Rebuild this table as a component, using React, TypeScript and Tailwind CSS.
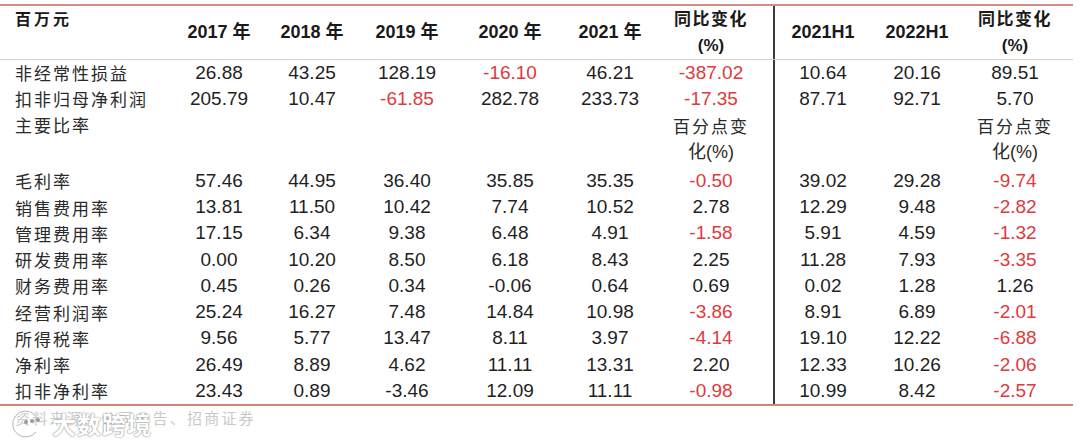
import React from "react";

type Cell = { v: string; red?: boolean };
type Row = { label: string; cells: Cell[] };

const N = (v: string): Cell => ({ v, red: v.startsWith("-") });
const B = (v: string): Cell => ({ v });

const widths = ["w-[170px]", "w-[98px]", "w-[88px]", "w-[102px]", "w-[104px]", "w-[96px]", "w-[115px]", "w-[98px]", "w-[92px]", "w-[110px]"];
const extra = ["", "", "", "", "", "", "pr-[9px]", "border-l-2 border-[#3a3a3a]", "", "pr-[6px]"];

const top: Row[] = [
  { label: "非经常性损益", cells: ["26.88", "43.25", "128.19", "-16.10", "46.21", "-387.02", "10.64", "20.16", "89.51"].map(N) },
  { label: "扣非归母净利润", cells: ["205.79", "10.47", "-61.85", "282.78", "233.73", "-17.35", "87.71", "92.71", "5.70"].map(N) },
];

const ratios: Row[] = [
  { label: "毛利率", cells: ["57.46", "44.95", "36.40", "35.85", "35.35", "-0.50", "39.02", "29.28", "-9.74"].map(N) },
  { label: "销售费用率", cells: ["13.81", "11.50", "10.42", "7.74", "10.52", "2.78", "12.29", "9.48", "-2.82"].map(N) },
  { label: "管理费用率", cells: ["17.15", "6.34", "9.38", "6.48", "4.91", "-1.58", "5.91", "4.59", "-1.32"].map(N) },
  { label: "研发费用率", cells: ["0.00", "10.20", "8.50", "6.18", "8.43", "2.25", "11.28", "7.93", "-3.35"].map(N) },
  {
    label: "财务费用率",
    cells: [N("0.45"), N("0.26"), N("0.34"), B("-0.06"), N("0.64"), N("0.69"), N("0.02"), N("1.28"), N("1.26")],
  },
  { label: "经营利润率", cells: ["25.24", "16.27", "7.48", "14.84", "10.98", "-3.86", "8.91", "6.89", "-2.01"].map(N) },
  { label: "所得税率", cells: ["9.56", "5.77", "13.47", "8.11", "3.97", "-4.14", "19.10", "12.22", "-6.88"].map(N) },
  { label: "净利率", cells: ["26.49", "8.89", "4.62", "11.11", "13.31", "2.20", "12.33", "10.26", "-2.06"].map(N) },
  {
    label: "扣非净利率",
    cells: [N("23.43"), N("0.89"), B("-3.46"), N("12.09"), N("11.11"), N("-0.98"), N("10.99"), N("8.42"), N("-2.57")],
  },
];

const cjk = "font-['Noto_Sans_CJK_SC',sans-serif]";
const num = "font-['Liberation_Sans','Noto_Sans_CJK_SC',sans-serif]";

function DataRow({ row, h }: { row: Row; h: string }) {
  return (
    <div className={`flex ${h}`}>
      <div className={`${widths[0]} flex items-center pl-[15px] text-[17px] tracking-[2px] text-[#2a2a2a] ${cjk}`}>{row.label}</div>
      {row.cells.map((c, i) => (
        <div
          key={i}
          className={`${widths[i + 1]} ${extra[i + 1]} flex items-center justify-center text-[19px] ${num} ${c.red ? "text-[#e0393e]" : "text-[#1f1f1f]"}`}
        >
          {c.v}
        </div>
      ))}
    </div>
  );
}

export default function App() {
  const headers = ["2017 年", "2018 年", "2019 年", "2020 年", "2021 年"];
  return (
    <div className="relative w-[1080px] h-[446px] bg-white overflow-hidden">
      <div className="w-[1073px] pt-[4px]">
        <div className="h-[2px] bg-[#cf8f84]" />
        <div className="flex h-[53px] font-bold text-[#1a1a1a]">
          <div className={`${widths[0]} pl-[15px] pt-[1px] text-[16px] leading-[22px] tracking-[3px] ${cjk}`}>百万元</div>
          {headers.map((t, i) => (
            <div key={t} className={`${widths[i + 1]} flex items-center justify-center text-[18px] ${num}`}>
              {t}
            </div>
          ))}
          <div className={`${widths[6]} ${extra[6]} flex flex-col items-center justify-center text-[17px] leading-[26px] ${num}`}>
            <span className="tracking-[1.5px]">同比变化</span>
            <span>(%)</span>
          </div>
          <div className={`${widths[7]} ${extra[7]} flex items-center justify-center text-[18px] ${num}`}>2021H1</div>
          <div className={`${widths[8]} flex items-center justify-center text-[18px] ${num}`}>2022H1</div>
          <div className={`${widths[9]} ${extra[9]} flex flex-col items-center justify-center text-[17px] leading-[26px] ${num}`}>
            <span className="tracking-[1.5px]">同比变化</span>
            <span>(%)</span>
          </div>
        </div>
        <div className="h-px bg-[#ddccc5]" />
        {top.map((r) => (
          <DataRow key={r.label} row={r} h="h-[26px]" />
        ))}
        <div className="flex h-[56px] text-[#2a2a2a]">
          <div className={`${widths[0]} pl-[15px] text-[17px] leading-[25px] tracking-[2px] ${cjk}`}>主要比率</div>
          {[1, 2, 3, 4, 5].map((i) => (
            <div key={i} className={widths[i]} />
          ))}
          <div className={`${widths[6]} ${extra[6]} flex flex-col items-center pt-[3px] text-[17px] leading-[25px] ${num}`}>
            <span className="tracking-[2px]">百分点变</span>
            <span className="text-[18px]">化(%)</span>
          </div>
          <div className={`${widths[7]} ${extra[7]}`} />
          <div className={widths[8]} />
          <div className={`${widths[9]} ${extra[9]} flex flex-col items-center pt-[3px] text-[17px] leading-[25px] ${num}`}>
            <span className="tracking-[2px]">百分点变</span>
            <span className="text-[18px]">化(%)</span>
          </div>
        </div>
        {ratios.map((r) => (
          <DataRow key={r.label} row={r} h="h-[26.25px]" />
        ))}
        <div className="h-[2px] bg-[#cc857a]" />
      </div>
      <div className={`pl-[15px] pt-[2px] text-[15px] leading-[20px] tracking-[2.2px] text-[#c9c9c9] ${cjk}`}>资料来源：公司公告、招商证券</div>
      <div className="absolute left-[8px] top-[406px] flex items-center gap-[8px]">
        <svg width="36" height="36" viewBox="0 0 36 36">
          <path d="M26 8 A13 13 0 1 0 28 26" fill="none" stroke="#ffffff" strokeWidth="4" />
          <path d="M26 8 A13 13 0 1 0 28 26" fill="none" stroke="#b5b5b5" strokeWidth="1" />
          <circle cx="18" cy="16" r="2" fill="#9a9a9a" />
          <circle cx="24" cy="15" r="2" fill="#9a9a9a" />
          <circle cx="30" cy="14" r="2" fill="#9a9a9a" />
        </svg>
        <span className={`text-[24px] font-bold tracking-[1px] text-white ${cjk} [text-shadow:0_0_1px_#8a8a8a,0_0_2px_#9a9a9a]`}>
          大数跨境
        </span>
      </div>
    </div>
  );
}
